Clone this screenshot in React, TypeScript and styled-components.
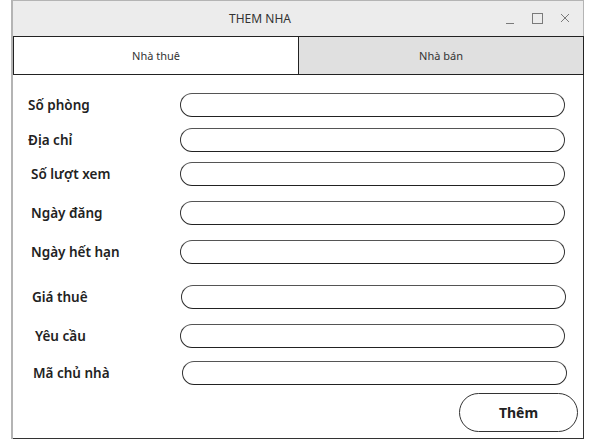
import React from 'react';
import styled, { createGlobalStyle } from 'styled-components';

const GlobalStyle = createGlobalStyle`
  html, body {
    margin: 0;
    padding: 0;
    background: #ffffff;
  }
  body {
    font-family: "Noto Sans", "Liberation Sans", sans-serif;
  }
`;

const Window = styled.div`
  margin-left: 11px;
  width: 573px;
  height: 439px;
  display: flex;
  flex-direction: column;
  border-left: 2px solid #b4b4b4;
  box-sizing: border-box;
`;

const TitleBar = styled.div`
  height: 36px;
  display: flex;
  align-items: center;
  background: #ececec;
  border-top: 1px solid #b4b4b4;
  border-right: 1px solid #b4b4b4;
  box-sizing: border-box;
`;

const Title = styled.div`
  flex: 1;
  text-align: center;
  font-size: 12px;
  color: #333;
  padding-left: 1px;
`;

const Controls = styled.div`
  display: flex;
  align-items: center;
  gap: 17px;
  padding-right: 13px;
`;

const Tabs = styled.div`
  display: flex;
  height: 39px;
  border: 1px solid #222;
  box-sizing: border-box;
`;

const Tab = styled.div<{ $active?: boolean }>`
  flex: 1;
  display: flex;
  align-items: center;
  justify-content: center;
  font-size: 11px;
  color: #333;
  background: ${p => (p.$active ? '#ffffff' : '#e0e0e0')};
  & + & {
    border-left: 1px solid #222;
  }
`;

const Body = styled.div`
  flex: 1;
  display: flex;
  flex-direction: column;
  padding-top: 17px;
  border-right: 1px solid #333;
  border-bottom: 1px solid #333;
  box-sizing: border-box;
`;

const Row = styled.div<{ $top: number }>`
  display: flex;
  align-items: center;
  height: 24px;
  margin-top: ${p => p.$top}px;
`;

const Label = styled.div<{ $indent: number }>`
  width: 167px;
  padding-left: ${p => p.$indent}px;
  box-sizing: border-box;
  font-size: 13.5px;
  font-weight: 600;
  color: #222;
  white-space: nowrap;
`;

const Field = styled.div<{ $shift: number }>`
  width: 385px;
  height: 24px;
  margin-left: ${p => p.$shift}px;
  border: 1.5px solid #333;
  border-bottom-color: #222;
  border-top-color: #555;
  border-radius: 12px;
  box-sizing: border-box;
`;

const Footer = styled.div`
  display: flex;
  justify-content: flex-end;
  padding: 8px 5px 0 0;
`;

const Button = styled.div`
  width: 119px;
  height: 39px;
  border: 1.5px solid #333;
  border-radius: 20px;
  box-sizing: border-box;
  display: flex;
  align-items: center;
  justify-content: center;
  font-size: 14px;
  font-weight: 700;
  color: #222;
`;

const rows = [
  { label: 'Số phòng', top: 1, indent: 15, shift: 0 },
  { label: 'Địa chỉ', top: 11, indent: 15, shift: 0 },
  { label: 'Số lượt xem', top: 10, indent: 18, shift: 0 },
  { label: 'Ngày đăng', top: 15, indent: 18, shift: 0 },
  { label: 'Ngày hết hạn', top: 15, indent: 18, shift: 0 },
  { label: 'Giá thuê', top: 21, indent: 19, shift: 1 },
  { label: 'Yêu cầu', top: 15, indent: 22, shift: 0 },
  { label: 'Mã chủ nhà', top: 13, indent: 20, shift: 2 },
];

const App: React.FC = () => {
  return (
    <>
      <GlobalStyle />
      <Window>
        <TitleBar>
          <Title>THEM NHA</Title>
          <Controls>
            <svg width="9" height="12" viewBox="0 0 9 12">
              <path d="M0 10.5 H8" stroke="#7a7a7a" strokeWidth="1" />
            </svg>
            <svg width="11" height="12" viewBox="0 0 11 12">
              <rect x="0.5" y="0.5" width="10" height="10" fill="none" stroke="#7a7a7a" strokeWidth="1" />
            </svg>
            <svg width="10" height="12" viewBox="0 0 10 12">
              <path d="M1 1 L9 9 M9 1 L1 9" stroke="#7a7a7a" strokeWidth="1" />
            </svg>
          </Controls>
        </TitleBar>
        <Tabs>
          <Tab $active>Nhà thuê</Tab>
          <Tab>Nhà bán</Tab>
        </Tabs>
        <Body>
          {rows.map(r => (
            <Row key={r.label} $top={r.top}>
              <Label $indent={r.indent}>{r.label}</Label>
              <Field $shift={r.shift} />
            </Row>
          ))}
          <Footer>
            <Button>Thêm</Button>
          </Footer>
        </Body>
      </Window>
    </>
  );
};

export default App;
